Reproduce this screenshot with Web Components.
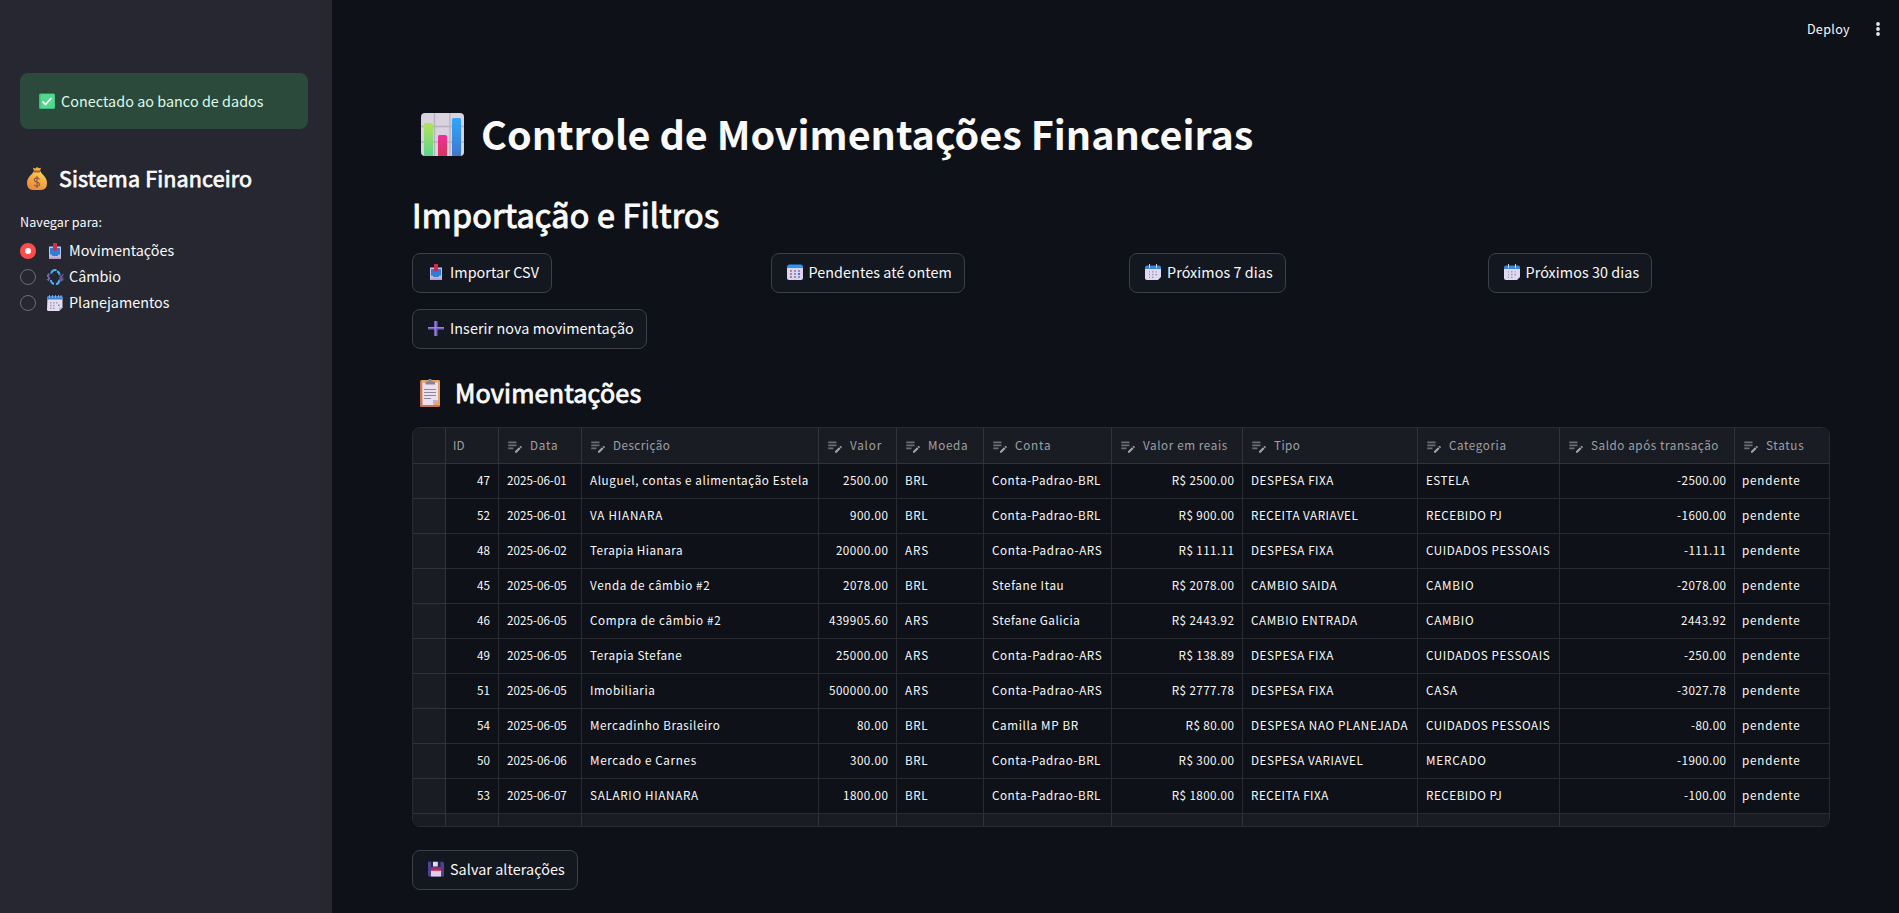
<!DOCTYPE html>
<html lang="pt-BR">
<head>
<meta charset="utf-8">
<title>Controle de Movimentações Financeiras</title>
<style>
html,body{margin:0;height:100%;overflow:hidden;background:#0e1117}
body{font-family:"Noto Sans CJK SC","Noto Sans",sans-serif;color:#fafafa;font-size:14.35px}
</style>
</head>
<body>
<finance-app></finance-app>
<script>
const ICONS = {
  check: `<rect x="3" y=".5" width="16" height="15.5" rx="1.5" fill="#3fb984"/><rect x="4.5" y="1" width="14" height="14" rx="1" fill="#52d88a"/><path d="M6.5 8.5l3 3 6-6.5" fill="none" stroke="#fff" stroke-width="1.7"/>`,
  inbox: `<path d="M5 4.500h12V16H5z" fill="#c9b8dd"/><path d="M5 3.500h12v7H5z" fill="#b6cbed"/><path d="M6 5h10v6.500h-1.500l-1 1.500h-5l-1-1.500H6z" fill="#2b7fd8"/><path d="M9 0h4v6.500L11 8.500 9 6.500z" fill="#d9264f"/><path d="M5.500 14.200h11V16h-11z" fill="#b79ecb"/>`,
  exchange: `<path d="M7 4.500C8 1.800 10 1 11 1h1.500M13 2.500c2 .5 2.500 2 2.500 3.500M15.500 11c-.5 3-2 4-3.500 4.300M10 15C8 14.500 7 13 6.800 11" fill="none" stroke="#3fb8f8" stroke-width="1.900"/><path d="M6.200 6C4 4.700 2.200 7 4.300 8 6.800 9 5.500 11.700 2.800 10.400M4.400 4.300v8M15 5l2.200 3L19.400 5M17.200 8v4.500M15 9h4.500M15 10.900h4.500" fill="none" stroke="#7766b4" stroke-width="1.100"/>`,
  spiral: `<path d="M3.500 2h15v10.500L15 16H4.500q-1.500 0-1.500-1.500z" fill="#e4dcf0"/><path d="M15 16v-3.500h3.500z" fill="#bfb5d0"/><path d="M3.500 1h14q1 0 1 1v2.500h-15z" fill="#3b84cf"/><path d="M5.500 0v3M8.500 0v3M11.500 0v3M14.500 0v3M17 0v3" stroke="#a3b8df" stroke-width=".8"/><g fill="#a49daf"><path d="M6 7h1.500v1.500H6zM9 7h1.500v1.500H9zM12 7h1.500v1.500H12zM6 9.700h1.500v1.500H6zM9 9.700h1.500v1.500H9zM6 12.500h1.500V14H6zM9 12.500h1.500V14H9z"/></g><path d="M14 9.500h1.500V11H14z" fill="#2e9af0"/>`,
  calendar: `<path d="M3 3.500h16V14q0 2-2 2H5q-2 0-2-2z" fill="#dfd2ef"/><path d="M3 4V3q0-2.500 2.500-2.500h11Q19 .5 19 3v1z" fill="#2896f5"/><g fill="#9a8fa9"><path d="M6 6h2v2H6zM10 6h2v2h-2zM14 6h2v2h-2zM6 9h2v2H6zM10 9h2v2h-2zM6 12h2v2H6zM10 12h2v2h-2zM14 12h2v2h-2z"/></g><path d="M14 9h2v2h-2z" fill="#168af0"/>`,
  tear: `<path d="M3 4h16v9l-3 3H5q-2 0-2-2z" fill="#e2d9f0"/><path d="M3 5V3.500q0-2 2-2h12q2 0 2 2V5z" fill="#3d88d8"/><path d="M7.500 0v4M14.500 0v4" stroke="#d9cbe7" stroke-width="1"/><g fill="#9a8fa9"><path d="M7 7.200h1v1.200H7zM10 7.200h1.500v1.200H10zM13.500 7.200h1v1.200h-1zM7 10h1v1.200H7zM10 10h1.500v1.200H10zM7 12.800h1V14H7zM10 12.800h1.500V14H10z"/></g><path d="M13.500 10h1.300v1.300h-1.300z" fill="#2e9af0"/>`,
  plus: `<path d="M9.500 1h3v6H19v2.500h-6.500V16h-3V9.500H3V7h6.500z" fill="#7b5fc6"/><path d="M9.500 1h1.200v15H9.500zM3 7h16v.9H3z" fill="#9a84da"/>`,
  floppy: `<path d="M3 .8h15l1 1.500V15.500H4L3 14.500z" fill="#4d4391"/><path d="M6 .8h9.500v5H6z" fill="#28204f"/><path d="M8 .8h4.800v4.700H8z" fill="#e3dcea"/><path d="M6 8h10v7.500H6z" fill="#dfd0ea"/><path d="M6 7.500h10v2.300H6z" fill="#d61d50"/>`,
  chart: `<defs><linearGradient id="a" x2="0" y2="1"><stop stop-color="#b4e35a"/><stop offset="1" stop-color="#5bd48d"/></linearGradient><linearGradient id="b" x2="0" y2="1"><stop stop-color="#f52e97"/><stop offset="1" stop-color="#d5355b"/></linearGradient><linearGradient id="c" x2="0" y2="1"><stop stop-color="#30a6fb"/><stop offset="1" stop-color="#3d79cf"/></linearGradient></defs><rect width="43" height="43" rx="4" fill="#d9d3e0"/><path d="M13.500 0v43M29 0v43M0 13.500h43M0 29h43" stroke="#b8b1c0" stroke-width="1.300"/><path d="M3 43V11.500Q3 10 4.500 10h6q1.500 0 1.500 1.500V43z" fill="url(#a)"/><path d="M17 43V23.500q0-1.500 1.500-1.500h6q1.500 0 1.500 1.500V43z" fill="url(#b)"/><path d="M31 43V6.500Q31 5 32.500 5h6Q40 5 40 6.500V43z" fill="url(#c)"/>`,
  bag: `<defs><linearGradient id="g" x1=".2" y1="1" x2=".8" y2="0"><stop stop-color="#eb8542"/><stop offset=".55" stop-color="#f7ad40"/><stop offset="1" stop-color="#ffd95a"/></linearGradient></defs><path d="M6 .8l2.500.7L10 0l2 1.300L14 .7 13 4H7z" fill="#f6b13f"/><path d="M7 4h6.300c.8 3 6.700 5.500 6.700 12q0 7-6 7H6q-6 0-6-7C0 9.500 6 7 7 4z" fill="url(#g)"/><path d="M7 3.500h6v2H7z" fill="#a95942"/><path d="M12.500 12.300C10.500 9.500 6 11.500 7.700 14c1.200 1.300 4.800.7 4.800 3.200 0 2.500-3.500 2.800-5.300.6M10 9v12" fill="none" stroke="#8b5948" stroke-width="1.200"/>`,
  clip: `<rect y="1" width="20" height="27" rx="1.500" fill="#c8745d"/><path d="M1.500 1H18q2 0 2 1.500V26H3z" fill="#e9a365"/><path d="M2.500 3.500h15.500V21L13 26H2.500z" fill="#e9e0f0"/><path d="M13 26v-5h5z" fill="#bfb0cc"/><path d="M5.500 2.500h3V0h3v2.500h3.500v3H5.500z" fill="#8c8295"/><path d="M4 10.500h12M4 13.500h12M4 16.500h12M4 19.500h7" stroke="#8f8798" stroke-width="1.100"/>`,
  edit: `<path fill="#6d6e73" d="M3 10h11v2.300H3zm0-4h11v2.300H3zm0 8h7v2.300H3z"/><path fill="#a0a1a5" d="M18.010 12.870l.71-.71c.39-.39 1.020-.39 1.410 0l.71.71c.39.39.39 1.020 0 1.410l-.71.71-2.120-2.120zm-.71.71l-5.300 5.300V21h2.120l5.300-5.300-2.120-2.120z"/>`
};
const BOX = {chart:"0 0 43 43", bag:"0 0 20 23", clip:"0 0 20 28", edit:"0 0 24 24"};

function define(name, css, html, setup){
  const tpl = document.createElement("template");
  tpl.innerHTML = `<style>${css}</style>${html}`;
  customElements.define(name, class extends HTMLElement{
    connectedCallback(){
      if(this.shadowRoot) return;
      this.attachShadow({mode:"open"}).append(tpl.content.cloneNode(true));
      if(setup) setup(this, this.shadowRoot);
    }
  });
}

// Tracks a run of text so that it fills the given width.
function track(span, width){
  const n = span.textContent.length;
  const ls = (width + 1.3 - span.getBoundingClientRect().width) / n;
  span.style.letterSpacing = ls.toFixed(3) + "px";
  span.style.marginRight = (-ls).toFixed(3) + "px";
}
const trackAll = (el,root)=>root.querySelectorAll("[data-w]").forEach(s=>track(s, +s.dataset.w));

function iconFrom(el, root){
  const i = document.createElement("ui-icon");
  i.setAttribute("name", el.getAttribute("icon"));
  root.querySelector("ui-icon").replaceWith(i);
}

define("ui-icon", `:host{display:block;flex:none;width:22px;height:16px}svg{display:block;width:100%;height:100%}`, ``, (el,root)=>{
  const n = el.getAttribute("name");
  if(n) root.innerHTML += `<svg viewBox="${BOX[n]||"0 0 22 16"}">${ICONS[n]}</svg>`;
});

define("action-button", `
:host{display:flex}
button{all:unset;box-sizing:border-box;display:flex;align-items:center;gap:3px;height:40px;padding:0 12px;border:1px solid #3d4046;border-radius:8px;background:#131720;white-space:nowrap;letter-spacing:.07px}
ui-icon{margin-top:-2px}
span{line-height:22px;margin-top:-2px}`,
`<button><ui-icon></ui-icon><span><slot></slot></span></button>`, iconFrom);

define("status-alert", `
:host{display:flex;align-items:center;gap:3px;height:56px;padding:0 16px;border-radius:8px;background:#2b4a3c;color:#dffde9;letter-spacing:.05px}
span{margin-top:-2px}`,
`<ui-icon name="check"></ui-icon><span><slot></slot></span>`);

define("nav-radio", `
:host{display:flex;align-items:center;height:26px}
i{box-sizing:border-box;width:16px;height:16px;border-radius:50%;border:1px solid #6b6c73;margin-right:8px}
:host([checked]) i{border:5px solid #ff4b4b;background:#fff}
ui-icon{margin-top:-1px}
span{margin-left:3px;margin-top:-2px;line-height:24px}`,
`<i></i><ui-icon></ui-icon><span><slot></slot></span>`, iconFrom);

define("side-bar", `
:host{display:block;box-sizing:border-box;width:332px;height:100%;background:#262730;padding:73px 24px 0 20px}
h2{display:flex;align-items:center;margin:32px 0 0;height:34px;font-size:21.5px;font-weight:400;-webkit-text-stroke:.75px #fafafa;line-height:34px;white-space:nowrap}
h2 ui-icon{width:20px;height:23px;margin:1px 12px 0 7px}
p{margin:17px 0 6px;font-size:12.56px;line-height:20px;height:20px;letter-spacing:.1px}
nav{display:block}`,
`<status-alert>Conectado ao banco de dados</status-alert>
<h2><ui-icon name="bag"></ui-icon><span data-w="192">Sistema Financeiro</span></h2>
<p>Navegar para:</p>
<nav><nav-radio icon="inbox" checked>Movimentações</nav-radio><nav-radio icon="exchange">Câmbio</nav-radio><nav-radio icon="spiral">Planejamentos</nav-radio></nav>`, trackAll);

define("top-bar", `
:host{display:flex;justify-content:flex-end;align-items:center;height:58px;padding-right:18px;font-size:12.56px}
span{margin-top:-2px;letter-spacing:.35px}
svg{margin-left:25px;display:block}`,
`<span>Deploy</span><svg width="6" height="16" viewBox="0 0 6 16" fill="#e6e6e8"><circle cx="3" cy="3" r="1.9"/><circle cx="3" cy="8" r="1.9"/><circle cx="3" cy="13" r="1.9"/></svg>`);

const COLS = ["","ID","Data","Descrição","Valor","Moeda","Conta","Valor em reais","Tipo","Categoria","Saldo após transação","Status"];
const ROWS = `47|2025-06-01|Aluguel, contas e alimentação Estela|2500.00|BRL|Conta-Padrao-BRL|R$ 2500.00|DESPESA FIXA|ESTELA|-2500.00|pendente
52|2025-06-01|VA HIANARA|900.00|BRL|Conta-Padrao-BRL|R$ 900.00|RECEITA VARIAVEL|RECEBIDO PJ|-1600.00|pendente
48|2025-06-02|Terapia Hianara|20000.00|ARS|Conta-Padrao-ARS|R$ 111.11|DESPESA FIXA|CUIDADOS PESSOAIS|-111.11|pendente
45|2025-06-05|Venda de câmbio #2|2078.00|BRL|Stefane Itau|R$ 2078.00|CAMBIO SAIDA|CAMBIO|-2078.00|pendente
46|2025-06-05|Compra de câmbio #2|439905.60|ARS|Stefane Galicia|R$ 2443.92|CAMBIO ENTRADA|CAMBIO|2443.92|pendente
49|2025-06-05|Terapia Stefane|25000.00|ARS|Conta-Padrao-ARS|R$ 138.89|DESPESA FIXA|CUIDADOS PESSOAIS|-250.00|pendente
51|2025-06-05|Imobiliaria|500000.00|ARS|Conta-Padrao-ARS|R$ 2777.78|DESPESA FIXA|CASA|-3027.78|pendente
54|2025-06-05|Mercadinho Brasileiro|80.00|BRL|Camilla MP BR|R$ 80.00|DESPESA NAO PLANEJADA|CUIDADOS PESSOAIS|-80.00|pendente
50|2025-06-06|Mercado e Carnes|300.00|BRL|Conta-Padrao-BRL|R$ 300.00|DESPESA VARIAVEL|MERCADO|-1900.00|pendente
53|2025-06-07|SALARIO HIANARA|1800.00|BRL|Conta-Padrao-BRL|R$ 1800.00|RECEITA FIXA|RECEBIDO PJ|-100.00|pendente`.split("\n").map(r=>["",...r.split("|")]);
const RIGHT = new Set([1,4,7,10]);
const WIDTHS = {
  "Data":27,"Descrição":56,"Valor":30.7,"Moeda":39,"Conta":35,"Valor em reais":83.5,"Tipo":25,"Categoria":56.3,"Saldo após transação":126.7,"Status":37,
  "Aluguel, contas e alimentação Estela":217.7,"VA HIANARA":71.7,"Terapia Hianara":91.7,"Venda de câmbio #2":119,"Compra de câmbio #2":130,"Terapia Stefane":91,"Imobiliaria":64,"Mercadinho Brasileiro":129,"Mercado e Carnes":105.5,"SALARIO HIANARA":107.5,
  "Conta-Padrao-BRL":107.7,"Conta-Padrao-ARS":109,"Stefane Itau":71,"Stefane Galicia":87,"Camilla MP BR":85.5,
  "DESPESA FIXA":81.7,"RECEITA VARIAVEL":106,"CAMBIO SAIDA":85,"CAMBIO ENTRADA":105.5,"DESPESA NAO PLANEJADA":156,"DESPESA VARIAVEL":111,"RECEITA FIXA":76.5,
  "ESTELA":42.3,"RECEBIDO PJ":75,"CUIDADOS PESSOAIS":123,"CAMBIO":47,"CASA":30.5,"MERCADO":59.5,"pendente":57.3,"BRL":21.7,"ARS":23
};
function widthOf(t){
  if(WIDTHS[t]) return WIDTHS[t];
  const m = t.match(/^(R\$ |-)?(\d+)\.\d\d$/);
  return m ? m[2].length*7 + 16.3 + (m[1] ? (m[1]==="-" ? 3.7 : 17.2) : 0) : 0;
}

define("data-grid", `
:host{display:block;box-sizing:border-box;height:400px;border:1px solid #292b31;border-radius:8px;overflow:hidden;font-size:11.67px}
.grid{display:grid;grid-template-columns:33px 53px 83px 237px 78px 87px 128px 131px 175px 142px 175px 94px;grid-template-rows:36px repeat(10,35px) 13px}
.grid>div{box-sizing:border-box;display:flex;align-items:center;padding:0 8px 4px;border-right:1px solid #292b31;border-bottom:1px solid #292b31;white-space:nowrap;overflow:hidden}
.grid>div:nth-child(12n){border-right:0}
.grid>div:nth-child(12n),.grid>div:nth-child(12n+2){padding-left:7px}
.grid>.h,.grid>.m{background:#1a1c24;border-color:#31333a}
.grid>.h{color:#a0a1a5;padding-bottom:3px}
.grid>.f{border-bottom:0}
.grid>.r{justify-content:flex-end}
span{flex:none}
ui-icon{width:18px;height:18px;margin:3px 6px 0 -1px}
.grid>div.h:nth-child(12) ui-icon{margin-left:0}`,
`<div class="grid"></div>`, (el,root)=>{
  const cell = t => { const w = widthOf(t); return `<span${w?` data-w="${w}"`:""}>${t}</span>`; };
  let h = COLS.map((c,i)=>`<div class="h">${i>1?'<ui-icon name="edit"></ui-icon>':""}${cell(c)}</div>`).join("");
  for(const r of ROWS) h += r.map((c,i)=>`<div class="${i?"":"m "}${RIGHT.has(i)?"r":""}">${cell(c)}</div>`).join("");
  h += COLS.map(()=>`<div class="m f"></div>`).join("");
  root.querySelector(".grid").innerHTML = h;
  trackAll(el, root);
});

define("page-main", `
:host{display:block;box-sizing:border-box;height:913px;overflow:hidden}
main{padding:48px 69px 0 80px}
h1,h2,h3{margin:0;display:flex;align-items:center;white-space:nowrap}
h1{height:53px;font-size:39.5px;font-weight:700}
h1 ui-icon{width:43px;height:43px;margin:3px 17px 0 9px}
h2{height:43px;margin-top:33px;font-size:32.3px;font-weight:400;-webkit-text-stroke:1.1px #fafafa}
h3{height:34px;margin-top:26px;font-size:25.1px;font-weight:400;-webkit-text-stroke:.85px #fafafa}
h3 ui-icon{width:20px;height:28px;margin:2px 15px 0 8px}
.row{display:grid;grid-template-columns:repeat(4,1fr);gap:16px;margin:18px 0 16px}
data-grid{margin:18px 0 23px}`,
`<top-bar></top-bar>
<main>
<h1><ui-icon name="chart"></ui-icon><span data-w="771">Controle de Movimentações Financeiras</span></h1>
<h2><span data-w="306">Importação e Filtros</span></h2>
<div class="row"><action-button icon="inbox">Importar CSV</action-button><action-button icon="calendar">Pendentes até ontem</action-button><action-button icon="tear">Próximos 7 dias</action-button><action-button icon="tear">Próximos 30 dias</action-button></div>
<action-button icon="plus">Inserir nova movimentação</action-button>
<h3><ui-icon name="clip"></ui-icon><span data-w="185">Movimentações</span></h3>
<data-grid></data-grid>
<action-button icon="floppy">Salvar alterações</action-button>
</main>`, trackAll);

define("finance-app", `:host{display:grid;grid-template-columns:332px 1fr;height:913px}`, `<side-bar></side-bar><page-main></page-main>`);
</script>
</body>
</html>
